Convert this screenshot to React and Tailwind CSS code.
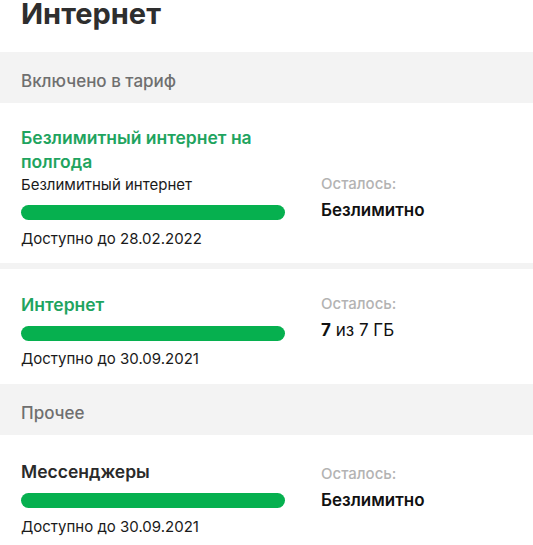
const font = { fontFamily: 'Inter, "Noto Sans", sans-serif' }

function Bar() {
  return <div className="h-[15px] w-[264px] rounded-full bg-[#06b04f]" />
}

function Band({ children }) {
  return (
    <div className="h-[51px] bg-[#f3f3f3] px-[21px] flex items-center text-[17px] font-medium text-[#6f6f6f] pt-[8px]">
      {children}
    </div>
  )
}

function Right({ children, pt }) {
  return (
    <div className={`flex-1 pl-[36px] ${pt}`}>
      <div className="text-[15px] leading-[22px] text-[#b3b3b3] font-medium">Осталось:</div>
      <div className="mt-[4px] text-[17px] leading-[22px] text-[#111]">{children}</div>
    </div>
  )
}

export default function App() {
  return (
    <div className="w-[533px] h-[545px] overflow-hidden bg-white" style={font}>
      <div className="h-[52px] px-[21px]">
        <h1 className="text-[29px] font-bold text-[#2e2e2e] leading-[28px]">Интернет</h1>
      </div>
      <Band>Включено в тариф</Band>

      {/* Безлимитный на полгода */}
      <div className="flex pl-[21px] pt-[23px] pb-[13px]">
        <div className="w-[264px]">
          <div className="text-[17.5px] font-semibold leading-[24px] text-[#1fa45f]">Безлимитный интернет на полгода</div>
          <div className="text-[15px] leading-[22px] text-[#1a1a1a]">Безлимитный интернет</div>
          <div className="mt-[9px]"><Bar /></div>
          <div className="mt-[8px] text-[15px] leading-[22px] text-[#1a1a1a]">Доступно до 28.02.2022</div>
        </div>
        <Right pt="pt-[47px]"><span className="font-semibold">Безлимитно</span></Right>
      </div>

      <div className="h-[6px] bg-[#f3f3f3]" />

      {/* Интернет */}
      <div className="flex pl-[21px] pt-[24px] pb-[14px]">
        <div className="w-[264px]">
          <div className="text-[17.5px] font-semibold leading-[24px] text-[#1fa45f]">Интернет</div>
          <div className="mt-[9px]"><Bar /></div>
          <div className="mt-[7px] text-[15px] leading-[22px] text-[#1a1a1a]">Доступно до 30.09.2021</div>
        </div>
        <Right pt="pt-[0px]"><span className="font-bold">7</span> из 7 ГБ</Right>
      </div>

      <Band>Прочее</Band>

      {/* Мессенджеры */}
      <div className="flex pl-[21px] pt-[25px] pb-[14px]">
        <div className="w-[264px]">
          <div className="text-[17.5px] font-semibold leading-[24px] text-[#2a2a2a]">Мессенджеры</div>
          <div className="mt-[9px]"><Bar /></div>
          <div className="mt-[8px] text-[15px] leading-[22px] text-[#1a1a1a]">Доступно до 30.09.2021</div>
        </div>
        <Right pt="pt-[3px]"><span className="font-semibold">Безлимитно</span></Right>
      </div>
    </div>
  )
}
